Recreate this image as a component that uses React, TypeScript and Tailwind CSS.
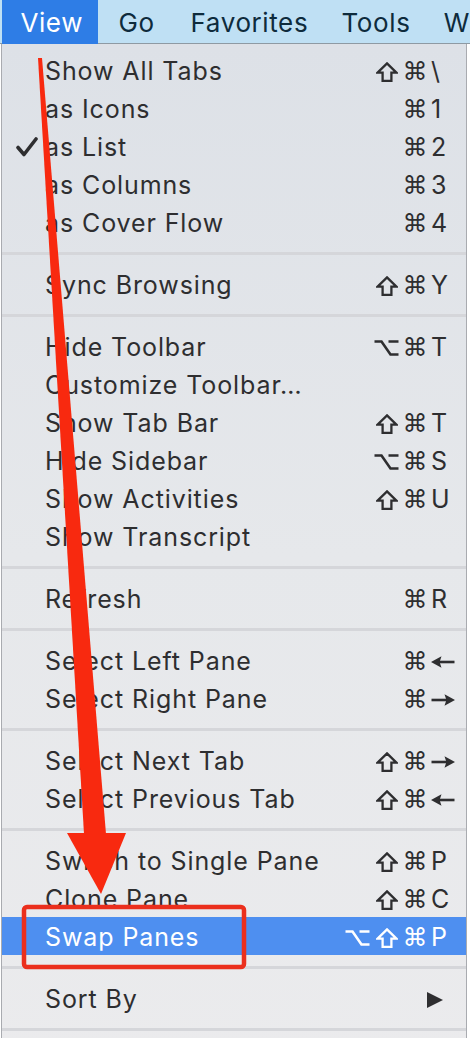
import React from 'react';

type Item = {
  label: string;
  mods?: string[];
  keyChar?: string;
  checked?: boolean;
  active?: boolean;
  submenu?: boolean;
};

const groups: Item[][] = [
  [
    { label: 'Show All Tabs', mods: ['shift', 'cmd'], keyChar: '\\' },
    { label: 'as Icons', mods: ['cmd'], keyChar: '1' },
    { label: 'as List', mods: ['cmd'], keyChar: '2', checked: true },
    { label: 'as Columns', mods: ['cmd'], keyChar: '3' },
    { label: 'as Cover Flow', mods: ['cmd'], keyChar: '4' },
  ],
  [{ label: 'Sync Browsing', mods: ['shift', 'cmd'], keyChar: 'Y' }],
  [
    { label: 'Hide Toolbar', mods: ['opt', 'cmd'], keyChar: 'T' },
    { label: 'Customize Toolbar…' },
    { label: 'Show Tab Bar', mods: ['shift', 'cmd'], keyChar: 'T' },
    { label: 'Hide Sidebar', mods: ['opt', 'cmd'], keyChar: 'S' },
    { label: 'Show Activities', mods: ['shift', 'cmd'], keyChar: 'U' },
    { label: 'Show Transcript' },
  ],
  [{ label: 'Refresh', mods: ['cmd'], keyChar: 'R' }],
  [
    { label: 'Select Left Pane', mods: ['cmd'], keyChar: 'left' },
    { label: 'Select Right Pane', mods: ['cmd'], keyChar: 'right' },
  ],
  [
    { label: 'Select Next Tab', mods: ['shift', 'cmd'], keyChar: 'right' },
    { label: 'Select Previous Tab', mods: ['shift', 'cmd'], keyChar: 'left' },
  ],
  [
    { label: 'Switch to Single Pane', mods: ['shift', 'cmd'], keyChar: 'P' },
    { label: 'Clone Pane', mods: ['shift', 'cmd'], keyChar: 'C' },
    { label: 'Swap Panes', mods: ['opt', 'shift', 'cmd'], keyChar: 'P', active: true },
  ],
  [{ label: 'Sort By', submenu: true }],
];

// modifier glyphs drawn to match the mac menu font
const Mod: React.FC<{ name: string; color: string }> = ({ name, color }) => {
  if (name === 'cmd') {
    return <span className="font-['DejaVu_Sans',sans-serif] text-[25px] leading-none">⌘</span>;
  }
  if (name === 'shift') {
    return (
      <svg width="22" height="20" viewBox="0 0 22 20">
        <path d="M11 1.4 L20.4 10.6 H15.4 V18.8 H6.6 V10.6 H1.6 Z" fill="none" stroke={color} strokeWidth="2.3" strokeLinejoin="miter" />
      </svg>
    );
  }
  return (
    <svg width="25" height="18" viewBox="0 0 25 18">
      <path d="M0.5 2.5 H7.5 L16.5 15.5 H24.5 M14.5 2.5 H24.5" fill="none" stroke={color} strokeWidth="2.6" />
    </svg>
  );
};

const Arrow: React.FC<{ dir: string; color: string }> = ({ dir, color }) => (
  <svg width="24" height="14" viewBox="0 0 24 14" className={dir === 'right' ? 'rotate-180' : ''}>
    <path d="M6 7 H23.5" stroke={color} strokeWidth="2.6" />
    <path d="M0 7 L10.5 1.2 L8.6 7 L10.5 12.8 Z" fill={color} />
  </svg>
);

const MenuRow: React.FC<{ item: Item }> = ({ item }) => {
  const color = item.active ? '#ffffff' : '#2e2e30';
  const isArrow = item.keyChar === 'left' || item.keyChar === 'right';
  return (
    <div
      className={`relative flex h-[38px] shrink-0 items-center pl-[43px] pt-[3px] text-[25px] tracking-[0.9px] ${
        item.active ? 'bg-[#4e8ff0] text-white' : 'text-[#2e2e30]'
      }`}
    >
      {item.checked && (
        <svg className="absolute left-[14px] top-[10px]" width="22" height="20" viewBox="0 0 22 20">
          <path d="M2 10.5 L8 17.5 L20 2" fill="none" stroke="#2e2e30" strokeWidth="3.6" strokeLinecap="round" strokeLinejoin="round" />
        </svg>
      )}
      <span>{item.label}</span>
      {item.keyChar && (
        <div className="ml-auto flex items-center pr-[7px]">
          {item.mods?.map((m, i) => (
            <span key={i} className="flex w-[29px] items-center justify-center">
              <Mod name={m} color={color} />
            </span>
          ))}
          <span className="flex w-[29px] items-center pl-[1px] tracking-normal">
            {isArrow ? <Arrow dir={item.keyChar} color={color} /> : item.keyChar}
          </span>
        </div>
      )}
      {item.submenu && (
        <svg className="ml-auto mr-[22px]" width="18" height="18" viewBox="0 0 18 18">
          <path d="M1 1 L17 9 L1 17 Z" fill="#2e2e30" />
        </svg>
      )}
    </div>
  );
};

const Separator: React.FC = () => (
  <div className="flex h-[24px] shrink-0 items-center">
    <div className="h-[3px] w-full bg-[#d5d6da]" />
  </div>
);

const App: React.FC = () => {
  return (
    <div className="relative h-[1038px] w-[470px] overflow-hidden bg-white font-['Inter',sans-serif]">
      {/* menu bar */}
      <div className="flex h-[44px] items-center border-b border-[#8e9aa3] bg-[#bfe0f4] pt-[2px] text-[26px] tracking-[0.6px] text-[#0e2b3c]">
        <div className="ml-[2px] -mt-[2px] flex h-[44px] w-[99px] items-center justify-center bg-[#2e7de6] pl-[3px] pt-[2px] text-white">View</div>
        <span className="ml-[20px] w-[74px]">Go</span>
        <span className="w-[155px]">Favorites</span>
        <span className="w-[105px]">Tools</span>
        <span>W</span>
      </div>

      <div className="flex">
        {/* dropdown */}
        <div className="ml-[1px] flex w-[466px] flex-col border-x border-[#a9abb0] bg-gradient-to-b from-[#dde1e7] via-[#e6e8eb] to-[#ebebed] pt-[7px]">
          {groups.map((g, gi) => (
            <React.Fragment key={gi}>
              {gi > 0 && <Separator />}
              {g.map((item) => (
                <MenuRow key={item.label} item={item} />
              ))}
            </React.Fragment>
          ))}
          <Separator />
          <div className="h-[20px]" />
        </div>
        <div className="flex-1 bg-white" />
      </div>

      {/* annotation */}
      <svg className="pointer-events-none absolute left-0 top-0" width="470" height="1038" viewBox="0 0 470 1038">
        <polygon points="38,58 42,58 106,834 84,834" fill="#f8290f" />
        <polygon points="67,833 126,833 101,894" fill="#f8290f" />
        <rect x="24" y="907" width="220" height="60" rx="3" fill="none" stroke="#eb2f1d" strokeWidth="4.5" />
      </svg>
    </div>
  );
};

export default App;
